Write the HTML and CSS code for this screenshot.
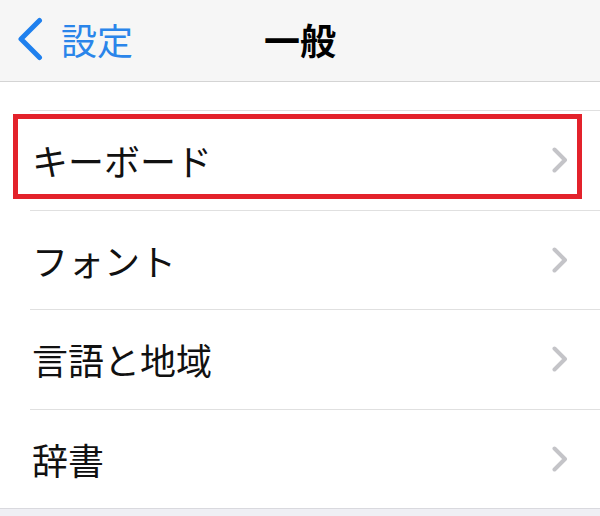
FILE: index.html
```html
<!DOCTYPE html>
<html lang="ja">
<head>
<meta charset="utf-8">
<link rel="stylesheet" href="styles.css">
</head>
<body>
<div class="screen">
  <header class="nav">
    <div class="back">
      <svg class="back-icon" width="26" height="44" viewBox="0 0 26 44"><polyline points="22.5,3.5 4,22 22.5,40.5" fill="none" stroke="#1f80ee" stroke-width="5" stroke-linecap="round" stroke-linejoin="round"/></svg>
      <span class="back-label">設定</span>
    </div>
    <div class="title">一般</div>
    <div class="spacer"></div>
  </header>
  <main class="list">
    <div class="row">
      <span class="label">キーボード</span>
      <svg class="chev" width="16" height="26" viewBox="0 0 16 26"><polyline points="2.5,2.5 13,13 2.5,23.5" fill="none" stroke="#c4c4c8" stroke-width="4" stroke-linecap="round" stroke-linejoin="round"/></svg>
      <div class="highlight"></div>
    </div>
    <div class="row">
      <span class="label">フォント</span>
      <svg class="chev" width="16" height="26" viewBox="0 0 16 26"><polyline points="2.5,2.5 13,13 2.5,23.5" fill="none" stroke="#c4c4c8" stroke-width="4" stroke-linecap="round" stroke-linejoin="round"/></svg>
    </div>
    <div class="row">
      <span class="label">言語と地域</span>
      <svg class="chev" width="16" height="26" viewBox="0 0 16 26"><polyline points="2.5,2.5 13,13 2.5,23.5" fill="none" stroke="#c4c4c8" stroke-width="4" stroke-linecap="round" stroke-linejoin="round"/></svg>
    </div>
    <div class="row">
      <span class="label">辞書</span>
      <svg class="chev" width="16" height="26" viewBox="0 0 16 26"><polyline points="2.5,2.5 13,13 2.5,23.5" fill="none" stroke="#c4c4c8" stroke-width="4" stroke-linecap="round" stroke-linejoin="round"/></svg>
    </div>
  </main>
  <div class="footer"></div>
</div>
</body>
</html>
```
FILE: styles.css
```css
html, body {
  margin: 0;
  padding: 0;
  background: #ffffff;
}
body {
  font-family: "Noto Sans CJK JP", "Noto Sans", sans-serif;
  width: 600px;
  height: 516px;
  overflow: hidden;
}
.screen {
  display: flex;
  flex-direction: column;
  height: 516px;
}
.nav {
  height: 81px;
  box-sizing: content-box;
  background: #f6f6f6;
  border-bottom: 1px solid #d4d4d4;
  display: grid;
  grid-template-columns: 1fr auto 1fr;
  align-items: center;
}
.back {
  display: flex;
  align-items: center;
  gap: 18px;
  padding-left: 17px;
  margin-top: -3px;
}
.back-icon {
  display: block;
}
.back-label {
  color: #2a85ea;
  font-size: 36px;
  line-height: 44px;
}
.title {
  font-size: 36px;
  font-weight: 700;
  color: #000;
  line-height: 44px;
  margin-top: -3px;
}
.list {
  padding-top: 28px;
  background: #fff;
}
.row {
  position: relative;
  margin-left: 30px;
  padding-left: 2px;
  padding-right: 32px;
  height: 99.5px;
  box-sizing: border-box;
  border-top: 1px solid #e0e0e0;
  display: flex;
  align-items: center;
  justify-content: space-between;
}
.label {
  font-size: 36px;
  color: #111;
  line-height: 44px;
}
.chev {
  display: block;
}
.highlight {
  position: absolute;
  top: 3px;
  left: -17px;
  width: 569px;
  height: 85px;
  box-sizing: border-box;
  border: 5px solid #e3222b;
}
.footer {
  flex: 1;
  background: #efeff4;
  border-top: 1px solid #d9d9de;
}
```
